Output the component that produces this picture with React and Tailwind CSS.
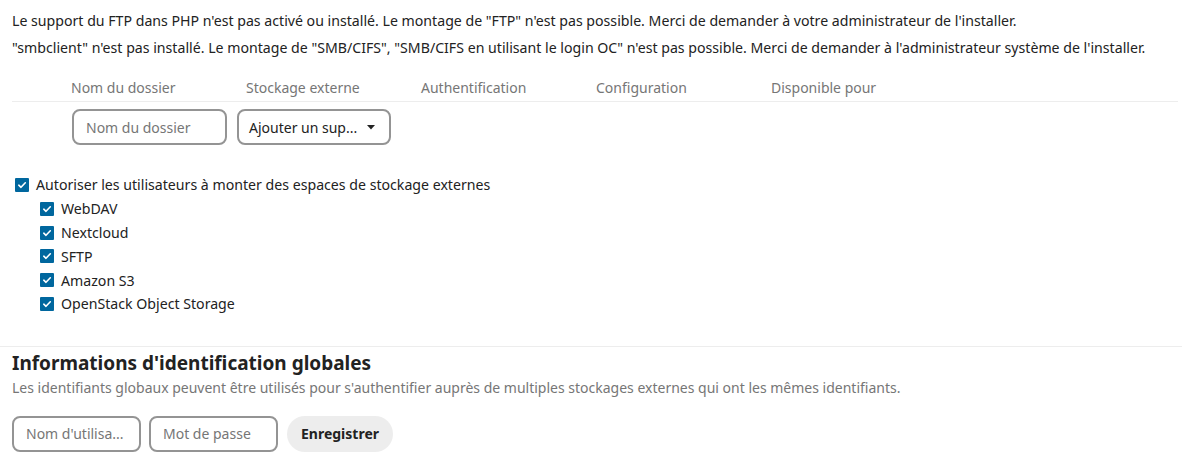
import React from "react";

function Check({ className = "" }) {
  return (
    <span className={"inline-flex items-center justify-center w-[14px] h-[14px] bg-[#00679e] rounded-[1px] shrink-0 " + className}>
      <svg width="10" height="10" viewBox="0 0 10 10" fill="none">
        <path d="M1.8 5.2 L4 7.3 L8.3 2.8" stroke="white" strokeWidth="1.6" strokeLinecap="round" strokeLinejoin="round" />
      </svg>
    </span>
  );
}

export default function App() {
  const backends = ["WebDAV", "Nextcloud", "SFTP", "Amazon S3", "OpenStack Object Storage"];
  return (
    <div className="w-[1182px] h-[463px] bg-white text-[#222222] text-[15px] overflow-hidden" style={{ fontFamily: '"Noto Sans", "Open Sans", sans-serif' }}>
      <div className="pl-[12px] pt-[7px]">
        <p className="leading-[27px] text-[14.15px]">Le support du FTP dans PHP n'est pas activé ou installé. Le montage de "FTP" n'est pas possible. Merci de demander à votre administrateur de l'installer.</p>
        <p className="leading-[27px] text-[14.15px]">"smbclient" n'est pas installé. Le montage de "SMB/CIFS", "SMB/CIFS en utilisant le login OC" n'est pas possible. Merci de demander à l'administrateur système de l'installer.</p>

        <div className="mt-[13px] mr-[4px] flex border-b border-[#ededed] h-[28px] items-center text-[14px] text-[#767676]">
          <div className="w-[59px]" />
          <div className="w-[175px]">Nom du dossier</div>
          <div className="w-[175px]">Stockage externe</div>
          <div className="w-[175px]">Authentification</div>
          <div className="w-[175px]">Configuration</div>
          <div className="w-[175px]">Disponible pour</div>
        </div>

        <div className="flex gap-[10px] mt-[7px] pl-[60px] items-center">
          <div className="w-[155px] h-[36px] border-2 border-[#949494] rounded-[8px] flex items-center px-[12px] text-[14px] text-[#767676]">Nom du dossier</div>
          <div className="w-[154px] h-[36px] border-2 border-[#949494] rounded-[8px] flex items-center justify-between pl-[10px] pr-[14px] text-[14px] text-[#222]">
            <span>Ajouter un sup...</span>
            <svg width="8" height="5" viewBox="0 0 8 5"><path d="M0 0 L8 0 L4 4.5 Z" fill="#222" /></svg>
          </div>
        </div>

        <div className="mt-[28px] flex items-center gap-[7px] h-[24px] pl-[3px] text-[14.15px]">
          <Check />
          <span>Autoriser les utilisateurs à monter des espaces de stockage externes</span>
        </div>
        <div className="pl-[28px] text-[14.15px]">
          {backends.map((b) => (
            <div key={b} className="flex items-center gap-[7px] h-[23.75px]">
              <Check />
              <span>{b}</span>
            </div>
          ))}
        </div>
      </div>

      <div className="mt-[30px] border-t border-[#ededed]" />
      <div className="pl-[12px]">
        <h2 className="text-[19px] font-bold leading-[30px] mt-[1px]">Informations d'identification globales</h2>
        <p className="text-[14px] text-[#767676] leading-[24px] mt-[-2px]">Les identifiants globaux peuvent être utilisés pour s'authentifier auprès de multiples stockages externes qui ont les mêmes identifiants.</p>
        <div className="flex gap-[8px] mt-[16px] items-center">
          <div className="w-[129px] h-[36px] border-2 border-[#949494] rounded-[8px] flex items-center px-[12px] text-[14px] text-[#767676]">Nom d'utilisa...</div>
          <div className="w-[129px] h-[36px] border-2 border-[#949494] rounded-[8px] flex items-center px-[12px] text-[14px] text-[#767676]">Mot de passe</div>
          <div className="ml-[1px] w-[106px] h-[36px] rounded-full bg-[#ededed] flex items-center justify-center text-[14px] font-bold">Enregistrer</div>
        </div>
      </div>
    </div>
  );
}
